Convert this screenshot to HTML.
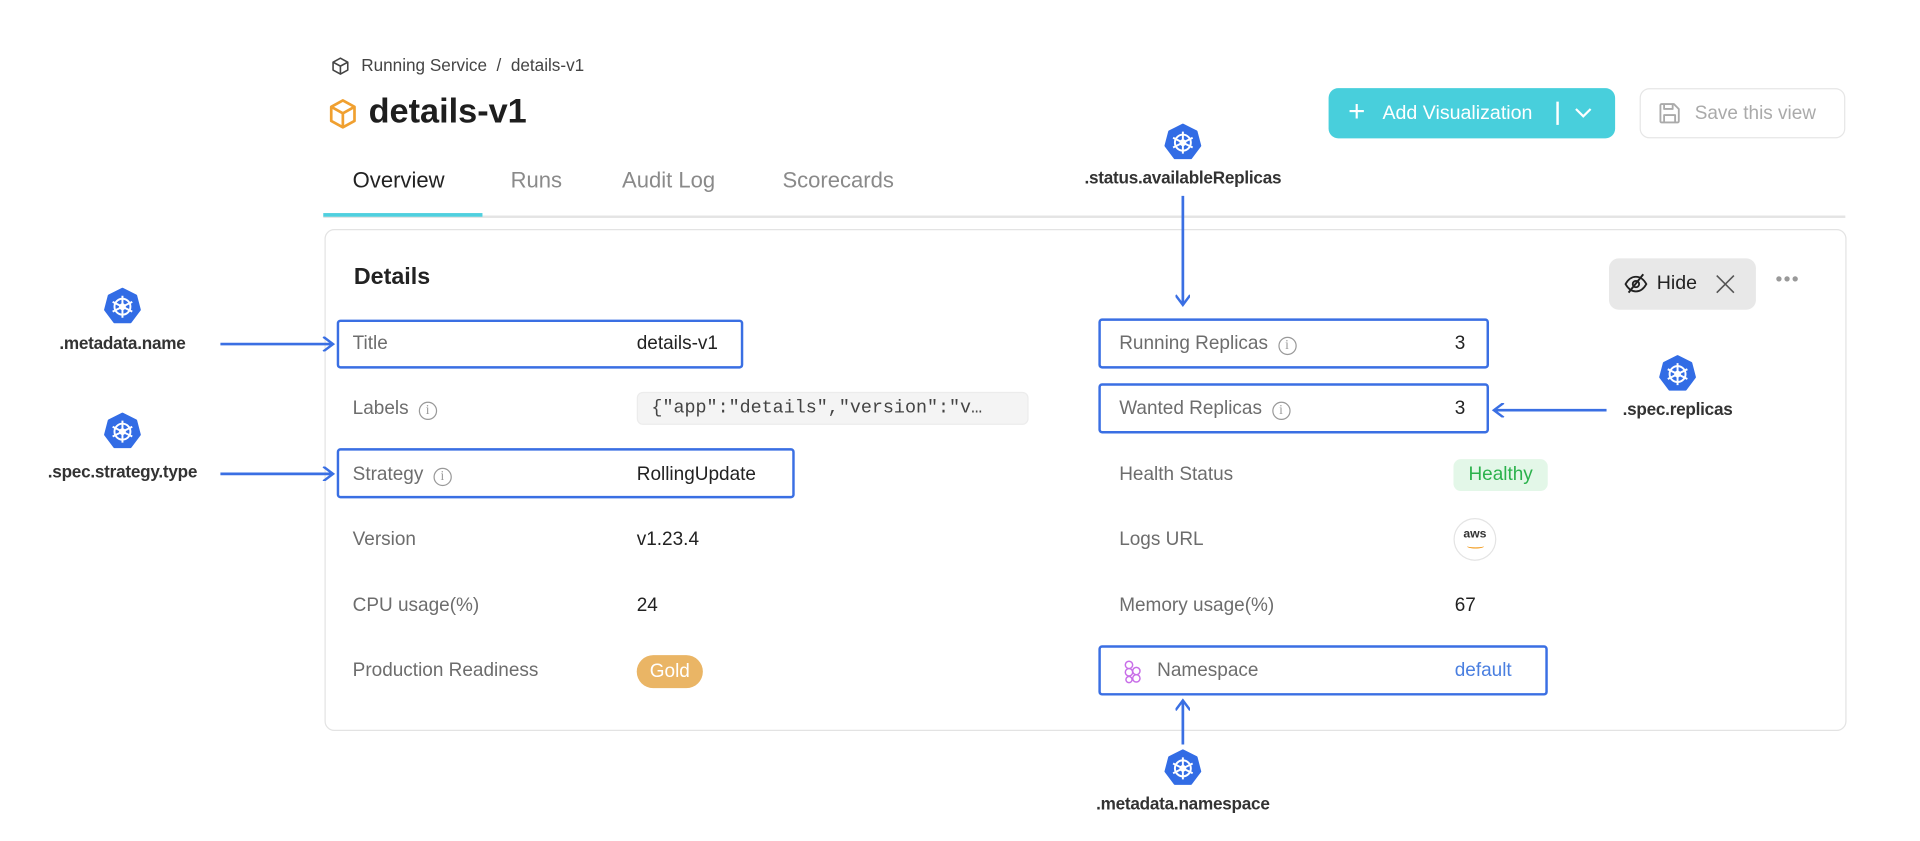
<!DOCTYPE html>
<html><head><meta charset="utf-8"><style>
html,body{margin:0;padding:0;background:#fff;overflow:hidden}
body{width:1920px;height:841px;position:relative}
#s{position:absolute;left:0;top:0;width:1568px;height:687px;transform:scale(1.2245);transform-origin:0 0;font-family:"Liberation Sans",sans-serif;color:#222}
.a{position:absolute;white-space:nowrap}
.lb{color:#6d6d6d;font-size:15.5px}
.vl{color:#222;font-size:15.5px}
.hb{position:absolute;border:2px solid #3a6fe3;border-radius:3px;box-sizing:border-box}
.ann{position:absolute;font-size:14px;font-weight:bold;color:#333;transform:translateX(-50%);white-space:nowrap;letter-spacing:-0.2px}
.info{display:inline-block;width:15px;height:15px;border:1.3px solid #999;border-radius:50%;box-sizing:border-box;text-align:center;font-size:11px;line-height:13px;color:#999;vertical-align:0px;margin-left:8px;font-family:"Liberation Serif",serif}
</style></head><body><div id="s">
<svg width="0" height="0" style="position:absolute"><defs>
<g id="k8s"><polygon points="15,1 26,6.5 29,18 21.5,28 8.5,28 1,18 4,6.5" fill="#326ce5" stroke="#326ce5" stroke-width="2" stroke-linejoin="round"/>
<g stroke="#fff" stroke-width="1.6" fill="none"><circle cx="15" cy="15.5" r="6.5"/><circle cx="15" cy="15.5" r="2"/>
<path d="M15 6.5V24.5M7 11.5L23 19.5M7 19.5L23 11.5"/></g></g>
<marker id="ar" markerWidth="12" markerHeight="12" refX="10" refY="6" orient="auto" markerUnits="userSpaceOnUse"><path d="M2 0L10 6L2 12" fill="none" stroke="#3a6fe3" stroke-width="2"/></marker>
</defs></svg>

<svg class="a" style="left:270px;top:46px" width="16" height="16" viewBox="0 0 16 16"><path d="M8 1.5L14 4.8V11.2L8 14.5L2 11.2V4.8Z M2 4.8L8 8L14 4.8 M8 8V14.5" fill="none" stroke="#444" stroke-width="1.3" stroke-linejoin="round"/></svg>
<div class="a" style="left:295px;top:45px;font-size:14px;color:#444">Running Service &nbsp;/&nbsp; details-v1</div>
<svg class="a" style="left:268px;top:80px" width="24" height="26" viewBox="0 0 24 26"><path d="M12 2L21.5 7.2V18.8L12 24L2.5 18.8V7.2Z M2.5 7.2L12 12.5L21.5 7.2 M12 12.5V24" fill="none" stroke="#f0a030" stroke-width="2.2" stroke-linejoin="round"/></svg>
<div class="a" style="left:301px;top:75px;font-size:28px;font-weight:bold;color:#1e1e1e">details-v1</div>

<div class="a" style="left:1085px;top:72px;width:234px;height:41px;background:#48cfdc;border-radius:8px;color:#fff;font-size:16px;line-height:41px">
<span style="position:absolute;left:16px;font-size:24px;font-weight:300;top:-1px">+</span>
<span style="position:absolute;left:44px">Add Visualization</span>
<span style="position:absolute;left:186px;top:11px;width:1.5px;height:19px;background:#fff"></span>
<svg style="position:absolute;left:200px;top:14px" width="16" height="12"><path d="M2 3L8 9L14 3" fill="none" stroke="#fff" stroke-width="1.8"/></svg>
</div>
<div class="a" style="left:1339px;top:72px;width:166px;height:39px;border:1px solid #e6e6e6;border-radius:8px;color:#aaa;font-size:15.5px;line-height:39px">
<svg style="position:absolute;left:14px;top:10px" width="19" height="19" viewBox="0 0 19 19"><path d="M2 3a1 1 0 011-1h10l4 4v10a1 1 0 01-1 1H3a1 1 0 01-1-1Z M5 2v4h7V2 M5 17v-6h9v6" fill="none" stroke="#aaa" stroke-width="1.5" stroke-linejoin="round"/></svg>
<span style="position:absolute;left:44px">Save this view</span></div>

<div class="a" style="left:288px;top:137px;font-size:18px;color:#222">Overview</div>
<div class="a" style="left:417px;top:137px;font-size:18px;color:#8a8a8a">Runs</div>
<div class="a" style="left:508px;top:137px;font-size:18px;color:#8a8a8a">Audit Log</div>
<div class="a" style="left:639px;top:137px;font-size:18px;color:#8a8a8a">Scorecards</div>
<div class="a" style="left:264px;top:176px;width:1243px;height:1.5px;background:#e4e4e4"></div>
<div class="a" style="left:264px;top:174px;width:130px;height:2.5px;background:#4fd0df"></div>

<div class="a" style="left:265px;top:187px;width:1241px;height:408px;border:1px solid #e3e3e3;border-radius:8px"></div>
<div class="a" style="left:289px;top:216px;font-size:19px;font-weight:bold;color:#222">Details</div>
<div class="a" style="left:1314px;top:211px;width:120px;height:42px;background:#e8e8e8;border-radius:8px;font-size:16px;line-height:42px;color:#222">
<svg style="position:absolute;left:12px;top:12px" width="20" height="18" viewBox="0 0 20 18"><path d="M1.5 9C4 4.5 7 3 10 3s6 1.5 8.5 6C16 13.5 13 15 10 15S4 13.5 1.5 9Z" fill="none" stroke="#222" stroke-width="1.5"/><circle cx="10" cy="9" r="2.6" fill="none" stroke="#222" stroke-width="1.5"/><path d="M4 16L16 1" stroke="#222" stroke-width="1.6"/></svg>
<span style="position:absolute;left:39px">Hide</span>
<svg style="position:absolute;left:87px;top:13px" width="16" height="16"><path d="M1 1L15 15M15 1L1 15" stroke="#555" stroke-width="1.3"/></svg></div>
<div class="a" style="left:1450px;top:220px;font-size:16px;color:#999;letter-spacing:1px">•••</div>

<div class="a lb" style="left:288px;top:272px">Title</div><div class="a vl" style="left:520px;top:272px">details-v1</div>
<div class="a lb" style="left:288px;top:325px">Labels<span class="info">i</span></div>
<div class="a" style="left:520px;top:320px;width:320px;height:27px;background:#f4f4f4;border:1px solid #ececec;border-radius:5px;box-sizing:border-box;font-family:'Liberation Mono',monospace;font-size:15px;line-height:25px;color:#444;padding-left:11px;overflow:hidden">{"app":"details","version":"v…</div>
<div class="a lb" style="left:288px;top:379px">Strategy<span class="info">i</span></div><div class="a vl" style="left:520px;top:379px">RollingUpdate</div>
<div class="a lb" style="left:288px;top:432px">Version</div><div class="a vl" style="left:520px;top:432px">v1.23.4</div>
<div class="a lb" style="left:288px;top:486px">CPU usage(%)</div><div class="a vl" style="left:520px;top:486px">24</div>
<div class="a lb" style="left:288px;top:539px">Production Readiness</div>
<div class="a" style="left:520px;top:535px;width:54px;height:27px;background:#eab565;border-radius:14px;color:#fff;font-size:15.5px;line-height:27px;text-align:center">Gold</div>

<div class="a lb" style="left:914px;top:272px">Running Replicas<span class="info">i</span></div><div class="a vl" style="left:1188px;top:272px">3</div>
<div class="a lb" style="left:914px;top:325px">Wanted Replicas<span class="info">i</span></div><div class="a vl" style="left:1188px;top:325px">3</div>
<div class="a lb" style="left:914px;top:379px">Health Status</div>
<div class="a" style="left:1187px;top:375px;width:77px;height:26px;background:#e3f7e8;border-radius:6px;color:#2bb24c;font-size:15.5px;line-height:26px;text-align:center">Healthy</div>
<div class="a lb" style="left:914px;top:432px">Logs URL</div>
<div class="a" style="left:1187px;top:423px;width:35px;height:35px;border:1px solid #e4e4e4;border-radius:50%;box-sizing:border-box;text-align:center;font-size:10px;line-height:26px;color:#333;font-weight:bold">aws<div style="position:absolute;left:10px;top:20px;width:14px;height:3px;border-bottom:1.5px solid #f29b1d;border-radius:0 0 50% 50%"></div></div>
<div class="a lb" style="left:914px;top:486px">Memory usage(%)</div><div class="a vl" style="left:1188px;top:486px">67</div>
<svg class="a" style="left:917px;top:539px" width="18" height="20" viewBox="0 0 18 20"><g fill="none" stroke="#c86ee8" stroke-width="1.2"><circle cx="5" cy="4" r="3"/><circle cx="5" cy="10" r="3"/><circle cx="11" cy="9" r="3"/><circle cx="11" cy="15" r="3"/><circle cx="5" cy="16" r="2.5"/></g></svg>
<div class="a lb" style="left:945px;top:539px">Namespace</div>
<div class="a" style="left:1188px;top:539px;font-size:15.5px;color:#4a7fe0">default</div>

<div class="hb" style="left:275px;top:261px;width:332px;height:40px"></div>
<div class="hb" style="left:275px;top:366px;width:374px;height:41px"></div>
<div class="hb" style="left:897px;top:260px;width:319px;height:41px"></div>
<div class="hb" style="left:897px;top:313px;width:319px;height:41px"></div>
<div class="hb" style="left:897px;top:527px;width:367px;height:41px"></div>

<svg class="a" style="left:0;top:0" width="1568" height="687">
<g stroke="#3a6fe3" stroke-width="2.2" fill="none" marker-end="url(#ar)">
<line x1="180" y1="281" x2="272" y2="281"/>
<line x1="180" y1="387" x2="272" y2="387"/>
<line x1="966" y1="160" x2="966" y2="249"/>
<line x1="1312" y1="335" x2="1220" y2="335"/>
<line x1="966" y1="608" x2="966" y2="572"/>
</g>
<use href="#k8s" x="85" y="235"/>
<use href="#k8s" x="85" y="337"/>
<use href="#k8s" x="951" y="101"/>
<use href="#k8s" x="1355" y="290"/>
<use href="#k8s" x="951" y="612"/>
</svg>
<div class="ann" style="left:100px;top:272px">.metadata.name</div>
<div class="ann" style="left:100px;top:377px">.spec.strategy.type</div>
<div class="ann" style="left:966px;top:137px">.status.availableReplicas</div>
<div class="ann" style="left:1370px;top:326px">.spec.replicas</div>
<div class="ann" style="left:966px;top:648px">.metadata.namespace</div>
</div></body></html>
